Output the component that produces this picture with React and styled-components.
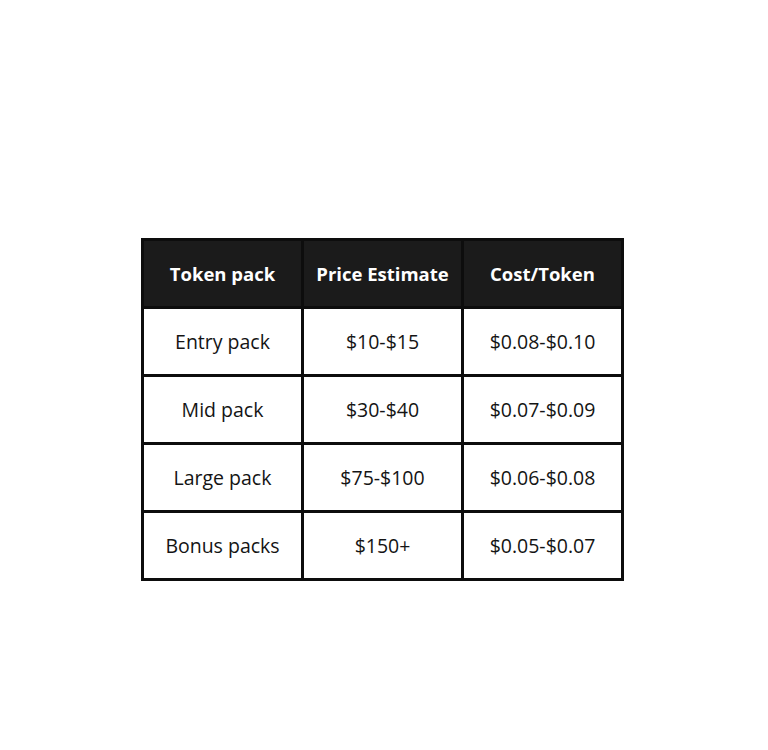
import React from 'react';
import styled, { createGlobalStyle } from "styled-components";

const GlobalStyle = createGlobalStyle`
  body {
    margin: 0;
    background: #ffffff;
    font-family: "Open Sans", "Liberation Sans", sans-serif;
  }
`

const Page = styled.div`
  display: flex;
  padding: 238px 0 0 141px;
  min-height: 750px;
  box-sizing: border-box;
`

const Table = styled.div`
  display: grid;
  grid-template-columns: repeat(3, 157px);
  grid-auto-rows: 65px;
  gap: 3px;
  padding: 3px;
  background: #0d0d0d;
  align-self: flex-start;
`

const Cell = styled.div`
  display: flex;
  align-items: center;
  justify-content: center;
  font-size: ${props => props.head ? '18.5px' : '19.5px'};
  font-weight: ${props => props.head ? 700 : 400};
  color: ${props => props.head ? '#ffffff' : '#141414'};
  background: ${props => props.head ? '#1b1b1b' : '#ffffff'};
`

const headers = ["Token pack", "Price Estimate", "Cost/Token"];

const rows = [
  ["Entry pack", "$10-$15", "$0.08-$0.10"],
  ["Mid pack", "$30-$40", "$0.07-$0.09"],
  ["Large pack", "$75-$100", "$0.06-$0.08"],
  ["Bonus packs", "$150+", "$0.05-$0.07"],
];

export default function App() {
  return (
    <>
      <GlobalStyle />
      <Page>
        <Table>
          {headers.map(h => <Cell head key={h}>{h}</Cell>)}
          {rows.map(r => r.map((c, i) => <Cell key={r[0] + i}>{c}</Cell>))}
        </Table>
      </Page>
    </>
  )
}
